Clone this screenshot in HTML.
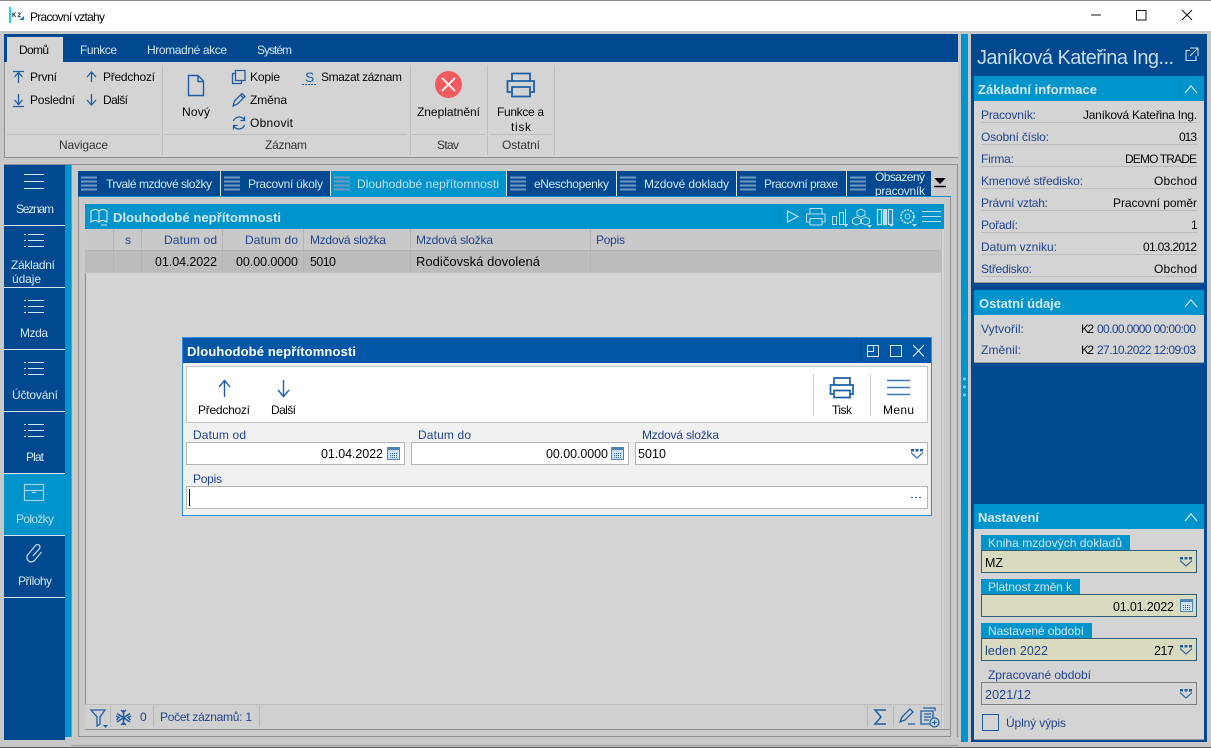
<!DOCTYPE html>
<html><head><meta charset="utf-8"><title>Pracovní vztahy</title>
<style>
html,body{margin:0;padding:0;width:1211px;height:748px;overflow:hidden;background:#c8c8c8}
svg{display:block;position:absolute;left:0;top:0}
text{font-family:"Liberation Sans",sans-serif;font-size:12px;fill:#050505;white-space:pre}
.b{fill:#1f4390}.w{fill:#d3e6f1}.h{font-weight:bold;fill:#d6e8f2;font-size:13px}
.v{font-size:12.5px}
rect{shape-rendering:crispEdges}
.i{fill:none;stroke:#1c5fa8;stroke-width:1.3}
.l{fill:none;stroke:#bfdcec;stroke-width:1}
.f{fill:#bfdcec}
</style></head><body>
<svg width="1211" height="748" viewBox="0 0 1211 748" xmlns="http://www.w3.org/2000/svg">
<defs>
<g id="tb"><path d="M0 1.500H16M0 5.500H16M0 9.500H16M0 13.500H16" stroke="#6f97c2" stroke-width="2" fill="none"/></g>
<g id="ls"><path d="M4 .5H20M4 6.500H20M4 12.500H20M0 .5H2M0 6.500H2M0 12.500H2" stroke="#d8e6f0" stroke-width="1" fill="none"/></g>
<g id="dd"><path d="M0 3.500L6 9L12 3.500" fill="none" stroke="#1c5fa8" stroke-width="1.100"/><rect x="0" y="0" width="3" height="2.500" fill="#1c5fa8"/><rect x="4.500" y="0" width="3" height="2.500" fill="#1c5fa8"/><rect x="9" y="0" width="3" height="2.500" fill="#1c5fa8"/></g>
<g id="cal"><rect x=".5" y=".5" width="12" height="12" fill="#cfe0ee" stroke="#4f86b8"/><rect x=".5" y=".5" width="12" height="2.500" fill="#4f86b8"/><path d="M3 6.500h7M3 8.500h7M3 10.500h7" stroke="#39689a" stroke-dasharray="1 1" fill="none"/></g>
<g id="up"><path d="M0 8L6 .8L12 8" fill="none" stroke="#d3e6f1" stroke-width="1.200"/></g>
</defs>

<!-- window -->
<rect x="0" y="0" width="1211" height="1" fill="#8a8a8a"/>
<rect x="0" y="1" width="1211" height="30" fill="#fff"/>
<rect x="9" y="7" width="2" height="16" fill="#19d4ee"/>
<path d="M12 7h9l3 3v4h-12z" fill="#f2f6f8"/><path d="M19 20h5v-4z" fill="#1c7fc8"/>
<text x="12" y="17" style="font-size:6px;font-weight:bold;fill:#123" textLength="9">K2</text>
<text x="30" y="21" textLength="75">Pracovní vztahy</text>
<path d="M1091 15H1101" stroke="#111" stroke-width="1"/>
<rect x="1136.500" y="10.500" width="9.500" height="9.500" fill="none" stroke="#111"/>
<path d="M1182 10L1192 20M1192 10L1182 20" stroke="#111" stroke-width="1"/>

<!-- ribbon -->
<rect x="4" y="34" width="954" height="28" fill="#004990"/>
<rect x="4" y="62" width="954" height="96" fill="#d4d4d4"/>
<rect x="4" y="157" width="954" height="1" fill="#8f8f8f"/>
<rect x="4" y="62" width="1" height="96" fill="#8f8f8f"/>
<rect x="7" y="37" width="56" height="25" fill="#d4d4d4"/>
<text x="19" y="54" textLength="30">Domů</text>
<text class="w" x="80" y="54" textLength="37">Funkce</text>
<text class="w" x="147" y="54" textLength="80">Hromadné akce</text>
<text class="w" x="257" y="54" textLength="35">Systém</text>
<path d="M162.500 65V155M410.500 65V155M487.500 65V155M554.500 65V155" stroke="#bdbdbd"/>
<path d="M7 134.500H160M165 134.500H407M412 134.500H485M490 134.500H552" stroke="#bdbdbd"/>
<text x="59" y="149" textLength="49" style="fill:#333">Navigace</text>
<text x="265" y="149" textLength="42" style="fill:#333">Záznam</text>
<text x="437" y="149" textLength="22" style="fill:#333">Stav</text>
<text x="502" y="149" textLength="38" style="fill:#333">Ostatní</text>
<text x="30" y="81" textLength="27">První</text>
<text x="103" y="81" textLength="52">Předchozí</text>
<text x="30" y="104" textLength="45">Poslední</text>
<text x="103" y="104" textLength="25">Další</text>
<text x="182" y="116" textLength="28">Nový</text>
<text x="250" y="81" textLength="30">Kopie</text>
<text x="250" y="104" textLength="37">Změna</text>
<text x="250" y="127" textLength="43">Obnovit</text>
<text x="321" y="81" textLength="81">Smazat záznam</text>
<text x="417" y="116" textLength="63">Zneplatnění</text>
<text x="497" y="116" textLength="47">Funkce a</text>
<text x="511" y="131" textLength="20">tisk</text>
<!-- ribbon icons -->
<path class="i" d="M13 71.500H24M18.500 83V73M14.500 77L18.500 72.500L22.500 77"/>
<path class="i" d="M13 106.500H24M18.500 94V104M14.500 100L18.500 104.500L22.500 100"/>
<path class="i" d="M91.500 82V72M87 77L91.500 72L96 77"/>
<path class="i" d="M91.500 94V105M87 100L91.500 105L96 100"/>
<path class="i" d="M188.500 75.500H198L203.500 81V95.500H188.500ZM198 76V81.500H203.500" style="stroke-width:1.400"/>
<path class="i" d="M235.500 73.500H232.500V83.500H241.500V80.500M235.500 70.500H245V80.500H235.500Z"/>
<path class="i" d="M233 106L234.500 101L242 93.500L245 96.500L237.500 104ZM240.500 95L243.500 98"/>
<path class="i" d="M233.500 121A6 6 0 0 1 244 119.500M244.500 116.500V120.500H240.500M244.500 125A6 6 0 0 1 234 126.500M233.500 129.500V125.500H237.500"/>
<text x="305" y="82" style="font-size:14px;fill:#1c5fa8" textLength="9">S</text>
<path d="M302 84.500H317" stroke="#1c5fa8" stroke-dasharray="2 1"/>
<circle cx="448.500" cy="84.500" r="13.500" fill="#f15b5f"/>
<path d="M442 78L455 91M455 78L442 91" stroke="#fff" stroke-width="1.800"/>
<path d="M512 81V73.500H530V81M512 92H507.500V81H534V92H530M512 87H530V96.500H512Z" fill="none" stroke="#1c5fa8" stroke-width="1.800"/>

<!-- left menu -->
<rect x="4" y="164" width="954" height="1" fill="#8f8f8f"/>
<rect x="4" y="165" width="61" height="575" fill="#004990"/>
<rect x="65" y="165" width="6" height="572" fill="#0094cc"/>
<rect x="4" y="473" width="61" height="62" fill="#0094cc"/>
<path d="M4 225.500H65M4 287.500H65M4 349.500H65M4 411.500H65M4 473.500H65M4 535.500H65M4 597.500H65" stroke="#d8e6f0"/>
<path d="M24 174.500H44M24 181.500H44M24 188.500H44" stroke="#d8e6f0" fill="none"/>
<use href="#ls" x="24" y="234"/><use href="#ls" x="24" y="300"/><use href="#ls" x="24" y="362"/><use href="#ls" x="24" y="424"/>
<text class="w" x="16" y="213" textLength="38">Seznam</text>
<text class="w" x="11" y="269" textLength="44">Základní</text>
<text class="w" x="12" y="283" textLength="29">údaje</text>
<text class="w" x="20" y="337" textLength="28">Mzda</text>
<text class="w" x="12" y="399" textLength="46">Účtování</text>
<text class="w" x="26" y="461" textLength="18">Plat</text>
<text x="16" y="523" textLength="38" style="fill:#b5dcee">Položky</text>
<text class="w" x="18" y="585" textLength="34">Přílohy</text>
<path d="M24.500 484.500H43.500V500.500H24.500ZM24.500 490.500H43.500M32 492.500H36" fill="none" stroke="#9fd0e8" stroke-width="1.200"/>
<path d="M33 556L39.500 548.500A2.500 2.500 0 0 0 35.500 545.500L28 554.500A4.300 4.300 0 0 0 34.500 560.500L41.500 552" fill="none" stroke="#bcd3e4" stroke-width="1.300"/>

<!-- main area -->
<rect x="71" y="165" width="887" height="572" fill="#cacaca"/>
<rect x="71" y="165" width="1" height="572" fill="#8f8f8f"/>
<rect x="957" y="165" width="1" height="572" fill="#8f8f8f"/>
<rect x="71" y="745" width="887" height="1" fill="#9a9a9a"/>
<rect x="0" y="747" width="1211" height="1" fill="#555"/>
<rect x="78" y="196" width="873" height="541" fill="#cacaca" stroke="none"/>
<rect x="78" y="196" width="1" height="541" fill="#8f8f8f"/>
<rect x="78" y="736" width="873" height="1" fill="#8f8f8f"/>
<rect x="950" y="196" width="1" height="541" fill="#8f8f8f"/>
<!-- tabs -->
<rect x="78" y="171" width="853" height="25" fill="#004990"/>
<rect x="331" y="171" width="175" height="25" fill="#0094cc"/>
<path d="M220.500 171V196M330.500 171V196M506.500 171V196M616.500 171V196M736.500 171V196M846.500 171V196" stroke="#e0e8ef"/>
<use href="#tb" x="81" y="176"/><use href="#tb" x="224" y="176"/><use href="#tb" x="334" y="176"/><use href="#tb" x="510" y="176"/><use href="#tb" x="620" y="176"/><use href="#tb" x="740" y="176"/><use href="#tb" x="850" y="176"/>
<text class="w" x="106" y="188" textLength="106">Trvalé mzdové složky</text>
<text class="w" x="248" y="188" textLength="75">Pracovní úkoly</text>
<text class="w" x="357" y="188" textLength="142" style="fill:#c4e2f1">Dlouhodobé nepřítomnosti</text>
<text class="w" x="534" y="188" textLength="75">eNeschopenky</text>
<text class="w" x="644" y="188" textLength="85">Mzdové doklady</text>
<text class="w" x="764" y="188" textLength="74">Pracovní praxe</text>
<text class="w" x="875" y="181" textLength="50">Obsazený</text>
<text class="w" x="875" y="195" textLength="50">pracovník</text>
<rect x="870" y="196" width="60" height="4" fill="#cacaca"/>
<rect x="78" y="196" width="873" height="1" fill="#0094cc"/>
<path d="M934 178H946L940 184Z" fill="#000"/><path d="M934 186.500H946" stroke="#000" stroke-width="1.500"/>

<!-- grid panel -->
<rect x="85" y="204" width="859" height="526" fill="#d4d4d4"/>
<rect x="85" y="204" width="1" height="526" fill="#8f8f8f"/>
<rect x="85" y="204" width="859" height="25" fill="#0094cc"/>
<rect x="85" y="229" width="856" height="21" fill="#c9c9c9"/>
<rect x="85" y="250" width="856" height="22" fill="#bcbcbc"/>
<rect x="85" y="272" width="856" height="1" fill="#c4c4c4"/>
<rect x="941" y="229" width="1" height="500" fill="#bdbdbd"/>
<path d="M113.500 229V272M141.500 229V272M222.500 229V272M303.500 229V272M410.500 229V272M590.500 229V272M85 250.500H941" stroke="#b4b4b4"/>
<path d="M91 211C94 209 97 209 99 211V222C97 220 94 220 91 222ZM99 211C101 209 104 209 107 211V222C104 220 101 220 99 222ZM101 225H107" fill="none" stroke="#d3e6f1" stroke-width="1.100"/>
<text class="h" x="113" y="222" textLength="168">Dlouhodobé nepřítomnosti</text>
<text class="b" x="125" y="244" textLength="6">s</text>
<text class="b" x="164" y="244" textLength="53">Datum od</text>
<text class="b" x="245" y="244" textLength="53">Datum do</text>
<text class="b" x="310" y="244" textLength="76">Mzdová složka</text>
<text class="b" x="416" y="244" textLength="77">Mzdová složka</text>
<text class="b" x="596" y="244" textLength="29">Popis</text>
<text class="v" x="155" y="266" textLength="62">01.04.2022</text>
<text class="v" x="236" y="266" textLength="62">00.00.0000</text>
<text class="v" x="310" y="266" textLength="26">5010</text>
<text x="416" y="266" textLength="124" style="font-size:13px">Rodičovská dovolená</text>
<!-- grid header icons -->
<path d="M779.500 207V226M803.500 207V226M919.500 207V226" stroke="#0a7fb4"/>
<path class="l" d="M787.500 211L798 216.500L787.500 222Z" style="stroke-width:1.200"/>
<path class="l" d="M810 214V208.500H822V214M810 222H806.500V214H825V222H822M810 218.500H822V225H810Z"/>
<path class="l" d="M832.500 216.500H836.500V224.500H832.500ZM839.500 212.500H843.500V224.500H839.500ZM845.500 209V224"/>
<path class="f" d="M843.500 224H848.500L846 227Z"/>
<path class="l" d="M861 209L865 211V215L861 217L857 215V211ZM856.500 217L860.500 219V223L856.500 225L852.500 223V219ZM865.500 217L869.500 219V223L865.500 225L861.500 223V219Z"/>
<path class="f" d="M867 225H872L869.500 228Z"/>
<path class="l" d="M877.500 209.500H881.500V224.500H877.500ZM888.500 209.500H892.500V224.500H888.500Z" style="stroke-width:1.300"/>
<rect x="883" y="209" width="4" height="16" class="f"/>
<path class="f" d="M889 224H894L891.500 227Z"/>
<circle cx="907.500" cy="216.500" r="6.500" class="l" style="stroke-width:1.800;stroke-dasharray:2 1"/>
<circle cx="907.500" cy="216.500" r="2.500" class="l"/>
<path class="f" d="M912 224H917L914.500 227Z"/>
<path d="M922 211.500H941M922 216.500H941M922 221.500H941" stroke="#bfdcec"/>

<!-- status -->
<rect x="85" y="704" width="859" height="1" fill="#bdbdbd"/>
<rect x="85" y="729" width="866" height="1" fill="#8f8f8f"/>
<rect x="85" y="705" width="856" height="24" fill="#d0d0d0"/>
<path d="M110.500 706V727M153.500 706V727M259.500 706V727M867.500 706V727M893.500 706V727" stroke="#b8b8b8"/>
<path class="i" d="M91 710H105L100 717V724L97 726V717Z"/>
<path d="M103 725H108L105.500 728Z" fill="#1c5fa8"/>
<path class="i" d="M123.500 710V725M117 713.500L130 722M130 713.500L117 722M121 710L123.500 712.500L126 710M121 725L123.500 722.500L126 725M116 716L119 717.500L116.500 720M131 716L128 717.500L130.500 720" style="stroke-width:1.500"/>
<text class="b" x="140" y="721" textLength="6">0</text>
<text class="b" x="160" y="721" textLength="92">Počet záznamů: 1</text>
<path class="i" d="M886 710H875L881 717L875 724H886" style="stroke-width:1.500"/>
<path class="i" d="M900 722L902 717L910 709L913 712L905 720ZM908 724H915"/>
<path class="i" d="M923 708H935V711M921 711H933V724H921ZM924 714H931M924 717H931M924 720H929"/>
<circle cx="934.500" cy="722.500" r="4.500" fill="#d0d0d0" stroke="#1c5fa8" stroke-width="1.200"/>
<path d="M932 722.500H937M934.500 720V725" stroke="#1c5fa8"/>

<!-- dialog -->
<rect x="182" y="337" width="750" height="179" fill="#2a8ee8"/>
<rect x="183" y="338" width="748" height="177" fill="#f0f0f0"/>
<rect x="183" y="338" width="748" height="25" fill="#0057a8"/>
<text x="187" y="356" textLength="169" style="font-weight:bold;fill:#fff;font-size:13px">Dlouhodobé nepřítomnosti</text>
<path d="M860.500 339V362" stroke="#004990"/>
<path d="M867.500 345.500H878.500V356.500H867.500ZM867.500 351.500H873.500V345.500" fill="none" stroke="#d8e8f4" stroke-width="1"/>
<rect x="890.500" y="345.500" width="11" height="11" fill="none" stroke="#d8e8f4"/>
<path d="M913 345L924 356.500M924 345L913 356.500" stroke="#e8f0f6" stroke-width="1.100"/>
<rect x="186.500" y="366.500" width="741" height="56" fill="#fff" stroke="#c4c4c4"/>
<path class="i" d="M224.500 397V381M219 387L224.500 380.500L230 387" style="stroke-width:1.400"/>
<path class="i" d="M283.500 380V396M278 390L283.500 396.500L289 390" style="stroke-width:1.400"/>
<text x="198" y="414" textLength="52">Předchozí</text>
<text x="271" y="414" textLength="25">Další</text>
<path d="M813.500 374V416M870.500 374V416" stroke="#d0d0d0"/>
<path d="M834 385V378H850V385M834 394H830.500V385H853V394H850M834 390.500H850V397.500H834Z" fill="none" stroke="#1c5fa8" stroke-width="1.700"/>
<path d="M887 380.500H910M887 387.500H910M887 394.500H910" stroke="#3a77b4" stroke-width="1.500"/>
<text x="832" y="414" textLength="20">Tisk</text>
<text x="883" y="414" textLength="31">Menu</text>
<text class="b" x="193" y="439" textLength="53">Datum od</text>
<text class="b" x="418" y="439" textLength="53">Datum do</text>
<text class="b" x="642" y="439" textLength="77">Mzdová složka</text>
<text class="b" x="193" y="483" textLength="29">Popis</text>
<rect x="186.500" y="442.500" width="218" height="22" fill="#fff" stroke="#b4b4b4"/>
<rect x="411.500" y="442.500" width="217" height="22" fill="#fff" stroke="#b4b4b4"/>
<rect x="635.500" y="442.500" width="292" height="22" fill="#fff" stroke="#b4b4b4"/>
<rect x="186.500" y="486.500" width="741" height="22" fill="#fff" stroke="#b4b4b4"/>
<text class="v" x="321" y="458" textLength="62">01.04.2022</text>
<text class="v" x="546" y="458" textLength="62">00.00.0000</text>
<text class="v" x="638" y="458" textLength="28">5010</text>
<use href="#cal" x="387" y="447"/><use href="#cal" x="611" y="447"/><use href="#dd" x="911" y="449"/>
<rect x="189" y="489" width="1" height="17" fill="#000"/>
<path d="M911 497.500h2M915 497.500h2M919 497.500h2" stroke="#1c5fa8"/>

<!-- splitter -->
<rect x="958" y="34" width="3" height="710" fill="#c8c8c8"/>
<rect x="961" y="34" width="7" height="708" fill="#0094cc"/>
<circle cx="964.500" cy="379" r="1.500" fill="#7fd0f0"/><circle cx="964.500" cy="387" r="1.500" fill="#7fd0f0"/><circle cx="964.500" cy="395" r="1.500" fill="#7fd0f0"/>

<!-- right panel -->
<rect x="971" y="34" width="236" height="708" fill="#004990"/>
<text x="977" y="64" textLength="197" style="font-size:20px;fill:#c8dcea">Janíková Kateřina Ing...</text>
<path d="M1190 50.500H1186V60.500H1196V56M1190 48H1198V56M1198 48L1190 56" fill="none" stroke="#c8dcea" stroke-width="1.100"/>

<rect x="974" y="76" width="230" height="207" fill="#d4d4d4"/>
<rect x="974" y="282" width="230" height="1" fill="#9a9a9a"/>
<rect x="974" y="76" width="230" height="25" fill="#0094cc"/>
<path d="M1179.500 78V99M1179.500 292V313M1179.500 506V527" stroke="#0a7fb4"/>
<use href="#up" x="1185" y="85"/>
<text class="h" x="978" y="94" textLength="119">Základní informace</text>
<path d="M981 122.500H1197M981 144.500H1197M981 166.500H1197M981 188.500H1197M981 210.500H1197M981 232.500H1197M981 254.500H1197M981 276.500H1197" stroke="#bcbcbc"/>
<text class="b" x="981" y="119" textLength="55">Pracovník:</text>
<text class="b" x="981" y="141" textLength="68">Osobní číslo:</text>
<text class="b" x="981" y="163" textLength="33">Firma:</text>
<text class="b" x="981" y="185" textLength="102">Kmenové středisko:</text>
<text class="b" x="981" y="207" textLength="67">Právní vztah:</text>
<text class="b" x="981" y="229" textLength="37">Pořadí:</text>
<text class="b" x="981" y="251" textLength="76">Datum vzniku:</text>
<text class="b" x="981" y="273" textLength="51">Středisko:</text>
<text x="1083" y="119" textLength="114">Janíková Kateřina Ing.</text>
<text x="1179" y="141" textLength="18">013</text>
<text x="1125" y="163" textLength="72">DEMO TRADE</text>
<text x="1154" y="185" textLength="43">Obchod</text>
<text x="1113" y="207" textLength="84">Pracovní poměr</text>
<text x="1191" y="229" textLength="6">1</text>
<text x="1143" y="251" textLength="54">01.03.2012</text>
<text x="1154" y="273" textLength="43">Obchod</text>

<rect x="974" y="290" width="230" height="73" fill="#d4d4d4"/>
<rect x="974" y="362" width="230" height="1" fill="#9a9a9a"/>
<rect x="974" y="290" width="230" height="25" fill="#0094cc"/>
<use href="#up" x="1185" y="299"/>
<text class="h" x="979" y="308" textLength="82">Ostatní údaje</text>
<text class="b" x="981" y="333" textLength="43">Vytvořil:</text>
<text class="b" x="981" y="354" textLength="40">Změnil:</text>
<text x="1081" y="333" textLength="13">K2</text>
<text x="1081" y="354" textLength="13">K2</text>
<text class="b" x="1097" y="333" textLength="99">00.00.0000 00:00:00</text>
<text class="b" x="1097" y="354" textLength="99">27.10.2022 12:09:03</text>

<rect x="974" y="504" width="230" height="236" fill="#d4d4d4"/>
<rect x="974" y="739" width="230" height="1" fill="#9a9a9a"/>
<rect x="974" y="504" width="230" height="25" fill="#0094cc"/>
<use href="#up" x="1185" y="513"/>
<text class="h" x="978" y="522" textLength="61">Nastavení</text>

<rect x="981" y="535" width="149" height="15" fill="#0094cc"/>
<rect x="981" y="579" width="99" height="15" fill="#0094cc"/>
<rect x="981" y="623" width="111" height="15" fill="#0094cc"/>
<text class="w" x="988" y="547" textLength="134">Kniha mzdových dokladů</text>
<text class="w" x="988" y="591" textLength="84">Platnost změn k</text>
<text class="w" x="988" y="635" textLength="96">Nastavené období</text>
<text class="b" x="988" y="679" textLength="103">Zpracované období</text>
<rect x="981.500" y="550.500" width="215" height="22" fill="#dadabe" stroke="#2f5f78"/>
<rect x="981.500" y="594.500" width="215" height="22" fill="#dadabe" stroke="#2f5f78"/>
<rect x="981.500" y="638.500" width="215" height="22" fill="#dadabe" stroke="#2f5f78"/>
<rect x="981.500" y="682.500" width="215" height="22" fill="#d4d4d4" stroke="#7f7f7f"/>
<text class="v" x="985" y="567" textLength="18">MZ</text>
<text class="v" x="1113" y="611" textLength="61">01.01.2022</text>
<text class="b v" x="985" y="655" textLength="63">leden 2022</text>
<text class="v" x="1154" y="655" textLength="20">217</text>
<text class="b v" x="985" y="699" textLength="46">2021/12</text>
<use href="#dd" x="1180" y="557"/><use href="#cal" x="1180" y="599"/><use href="#dd" x="1180" y="645"/><use href="#dd" x="1180" y="689"/>
<rect x="982.500" y="714.500" width="16" height="16" fill="none" stroke="#1c5fa8"/>
<text class="b" x="1006" y="727" textLength="60">Úplný výpis</text>
</svg>
</body></html>
